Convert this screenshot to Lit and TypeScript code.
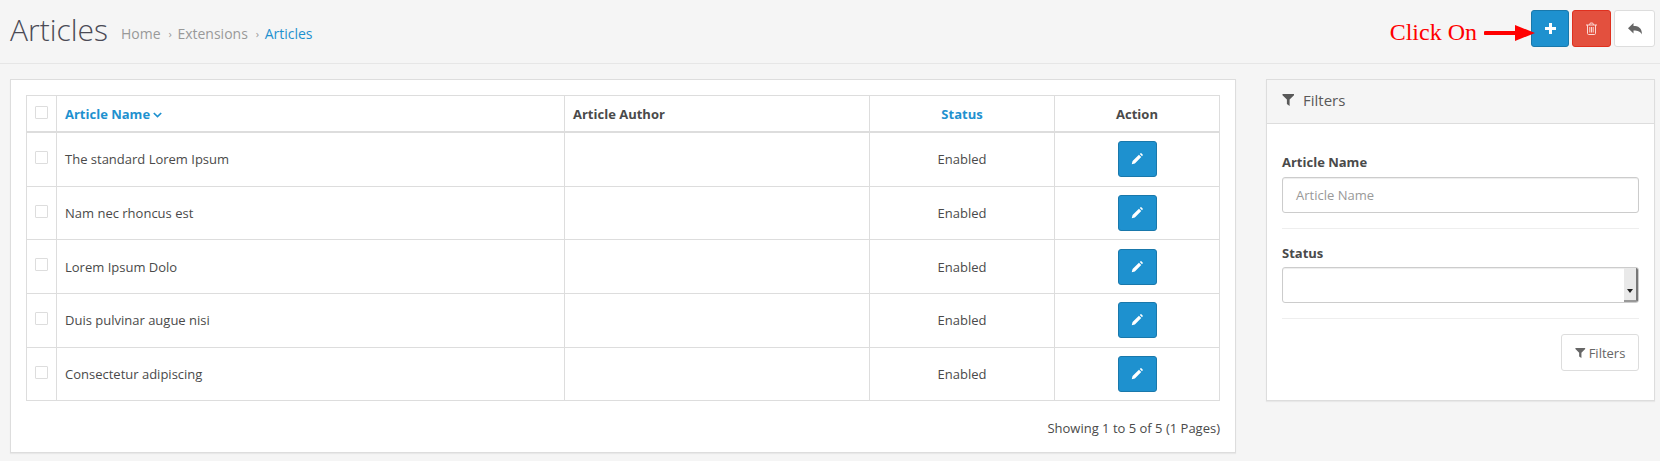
import { LitElement, html, css, svg } from 'lit';
import { customElement } from 'lit/decorators.js';

const ROWS = [
  'The standard Lorem Ipsum',
  'Nam nec rhoncus est',
  'Lorem Ipsum Dolo',
  'Duis pulvinar augue nisi',
  'Consectetur adipiscing',
];

const filterIcon = svg`<path d="M0.5 1h11.5v1.2L7.6 6.6V13L4.9 11V6.6L0.5 2.2z" fill="currentColor"/>`;

@customElement('app-root')
export class AppRoot extends LitElement {
  static styles = css`
    :host {
      display: block;
      height: 461px;
      overflow: hidden;
      background: #f5f5f5;
      font-family: 'Open Sans', sans-serif;
      font-size: 13px;
      color: #4a4a4a;
    }

    .header {
      height: 64px;
      box-sizing: border-box;
      border-bottom: 1px solid #e6e6e6;
      display: flex;
      align-items: center;
      padding: 0 5px 0 10px;
    }

    h1 {
      margin: 0 0 4px;
      font-size: 30px;
      font-weight: 300;
      line-height: 1.2;
      color: #4a4a55;
    }

    .crumbs {
      display: flex;
      align-items: center;
      margin: 3px 0 0 13px;
      font-size: 14px;
      color: #999;
    }

    .crumbs .sep {
      font-size: 11px;
      margin: 1px 5.5px 0 8px;
    }

    .crumbs .current {
      color: #1e91cf;
    }

    .toolbar {
      margin-left: auto;
      margin-top: -6px;
      display: flex;
      align-items: center;
    }

    .click-on {
      font-family: 'Liberation Serif', serif;
      font-size: 24px;
      color: #f00;
      margin: 7px 7px 0 0;
    }

    .arrow {
      display: block;
      position: relative;
      z-index: 1;
      margin: 9px -4px 0 0;
    }

    .btn {
      box-sizing: border-box;
      width: 39px;
      height: 37px;
      border-radius: 3px;
      border: 1px solid;
      display: flex;
      align-items: center;
      justify-content: center;
      margin-left: 3px;
    }

    .btn.add {
      width: 38px;
      background: #1e91cf;
      border-color: #1978ab;
      margin-left: 0;
    }

    .btn.del {
      background: #e3503e;
      border-color: #e0301e;
    }

    .btn.back {
      background: #fff;
      border-color: #ddd;
      width: 41px;
      color: #666;
    }

    .content {
      display: flex;
      align-items: flex-start;
      padding: 15px 0 0 10px;
      gap: 30px;
    }

    .panel {
      box-sizing: border-box;
      background: #fff;
      border: 1px solid #ddd;
      box-shadow: 0 1px 1px rgba(0, 0, 0, 0.05);
    }

    .list {
      width: 1226px;
      height: 374px;
      padding: 15px;
    }

    .filters {
      width: 389px;
      height: 322px;
    }

    table {
      width: 1193px;
      border-collapse: collapse;
      table-layout: fixed;
    }

    th,
    td {
      border: 1px solid #ddd;
      padding: 0 8px;
      text-align: left;
      font-size: 13px;
    }

    th {
      height: 35px;
      font-weight: 700;
      border-bottom-width: 2px;
    }

    td {
      height: 52.7px;
      color: #4a4a4a;
    }

    .center {
      text-align: center;
    }

    .link {
      color: #1e91cf;
    }

    .check {
      padding: 0;
      vertical-align: top;
      text-align: center;
    }

    .box {
      display: inline-block;
      box-sizing: border-box;
      width: 13px;
      height: 13px;
      border: 1px solid #ddd;
      border-radius: 1px;
      background: #fff;
      vertical-align: top;
      margin-top: 10px;
    }

    td .box {
      margin-top: 18px;
    }

    .sort {
      vertical-align: 1px;
    }

    .edit {
      box-sizing: border-box;
      width: 39px;
      height: 36px;
      margin: 0 auto;
      background: #1e91cf;
      border: 1px solid #1978ab;
      border-radius: 3px;
      display: flex;
      align-items: center;
      justify-content: center;
    }

    .showing {
      text-align: right;
      margin-top: 18px;
      line-height: 18px;
    }

    .filters-head {
      height: 44px;
      box-sizing: border-box;
      background: #f5f5f5;
      border-bottom: 1px solid #ddd;
      display: flex;
      align-items: center;
      gap: 8px;
      padding: 0 15px 3px;
      font-size: 15px;
      color: #595959;
    }

    .filters-body {
      padding: 29px 15px 0;
    }

    label {
      display: block;
      font-weight: 700;
      line-height: 18px;
      margin-bottom: 6px;
    }

    .status {
      margin-bottom: 5px;
    }

    .field {
      box-sizing: border-box;
      width: 100%;
      height: 36px;
      border: 1px solid #ccc;
      border-radius: 3px;
      background: #fff;
      box-shadow: inset 0 1px 1px rgba(0, 0, 0, 0.075);
      padding: 0 13px;
      display: flex;
      align-items: center;
      color: #999;
    }

    .select {
      padding: 0;
      overflow: hidden;
    }

    .spinner {
      margin-left: auto;
      box-sizing: border-box;
      width: 14px;
      height: 100%;
      background: #e9e9e9;
      border-right: 2px solid #777;
      border-bottom: 2px solid #999;
      display: flex;
      align-items: center;
      justify-content: center;
      padding-top: 13px;
    }

    .caret {
      width: 0;
      height: 0;
      border: 3px solid transparent;
      border-top: 4px solid #222;
      border-bottom: 0;
    }

    .divider {
      height: 1px;
      background: #eee;
      margin: 15px 0;
    }

    .filter-foot {
      display: flex;
      justify-content: flex-end;
    }

    .filter-btn {
      box-sizing: border-box;
      width: 78px;
      height: 37px;
      background: #fff;
      border: 1px solid #ddd;
      border-radius: 3px;
      display: flex;
      align-items: center;
      justify-content: center;
      gap: 3px;
      color: #666;
    }
  `;

  private _row(name: string) {
    return html`<tr>
      <td class="check"><span class="box"></span></td>
      <td>${name}</td>
      <td></td>
      <td class="center">Enabled</td>
      <td>
        <div class="edit">
          <svg width="12" height="12" viewBox="0 0 13 13">
            <path d="M8.6 1.9l2.5 2.5-6.9 6.9-3.4.9.9-3.4zM9.5 1l.7-.6c.3-.3.8-.3 1.1 0l1.3 1.3c.3.3.3.8 0 1.1l-.7.7z" fill="#fff"/>
          </svg>
        </div>
      </td>
    </tr>`;
  }

  render() {
    return html`
      <div class="header">
        <h1>Articles</h1>
        <div class="crumbs">
          <span>Home</span><span class="sep">›</span>
          <span>Extensions</span><span class="sep">›</span>
          <span class="current">Articles</span>
        </div>
        <div class="toolbar">
          <span class="click-on">Click On</span>
          <svg class="arrow" width="51" height="16" viewBox="0 0 51 16">
            <path d="M1.5 6h29.5V0l20 8-20 8v-6H1.5a2 2 0 0 1 0-4z" fill="#f00"/>
          </svg>
          <div class="btn add">
            <svg width="11" height="11" viewBox="0 0 11 11">
              <path d="M4 0h3v4h4v3H7v4H4V7H0V4h4z" fill="#fff"/>
            </svg>
          </div>
          <div class="btn del">
            <svg width="11" height="13" viewBox="0 0 11 13" fill="none" stroke="#fbd9d4" stroke-width="1">
              <path d="M0 3h11M3.5 3l.8-2h2.4l.8 2M1.5 3v8.5c0 .6.4 1 1 1h6c.6 0 1-.4 1-1V3M3.8 5v5.5M5.5 5v5.5M7.2 5v5.5"/>
            </svg>
          </div>
          <div class="btn back">
            <svg width="14" height="12" viewBox="0 0 14 12">
              <path d="M5.5 0v3C10 3 14 4.6 14 11.5 12.6 8.4 10 7.4 5.5 7.4v3L0 5.2z" fill="currentColor"/>
            </svg>
          </div>
        </div>
      </div>

      <div class="content">
        <div class="panel list">
          <table>
            <colgroup>
              <col style="width:30px" />
              <col style="width:508px" />
              <col style="width:305px" />
              <col style="width:185px" />
              <col style="width:165px" />
            </colgroup>
            <thead>
              <tr>
                <th class="check"><span class="box"></span></th>
                <th class="link">Article Name
                  <svg class="sort" width="9" height="6" viewBox="0 0 9 6">
                    <path d="M.8 1l3.7 3.6L8.2 1" fill="none" stroke="#1e91cf" stroke-width="1.7"/>
                  </svg>
                </th>
                <th>Article Author</th>
                <th class="center link">Status</th>
                <th class="center">Action</th>
              </tr>
            </thead>
            <tbody>${ROWS.map((r) => this._row(r))}</tbody>
          </table>
          <div class="showing">Showing 1 to 5 of 5 (1 Pages)</div>
        </div>

        <div class="panel filters">
          <div class="filters-head">
            <svg width="13" height="14" viewBox="0 0 13 14">${filterIcon}</svg>
            <span>Filters</span>
          </div>
          <div class="filters-body">
            <label>Article Name</label>
            <div class="field">Article Name</div>
            <div class="divider"></div>
            <label class="status">Status</label>
            <div class="field select">
              <div class="spinner"><span class="caret"></span></div>
            </div>
            <div class="divider"></div>
            <div class="filter-foot">
              <div class="filter-btn">
                <svg width="11" height="12" viewBox="0 0 13 14">${filterIcon}</svg>
                <span>Filters</span>
              </div>
            </div>
          </div>
        </div>
      </div>
    `;
  }
}

declare global {
  interface HTMLElementTagNameMap {
    'app-root': AppRoot;
  }
}
